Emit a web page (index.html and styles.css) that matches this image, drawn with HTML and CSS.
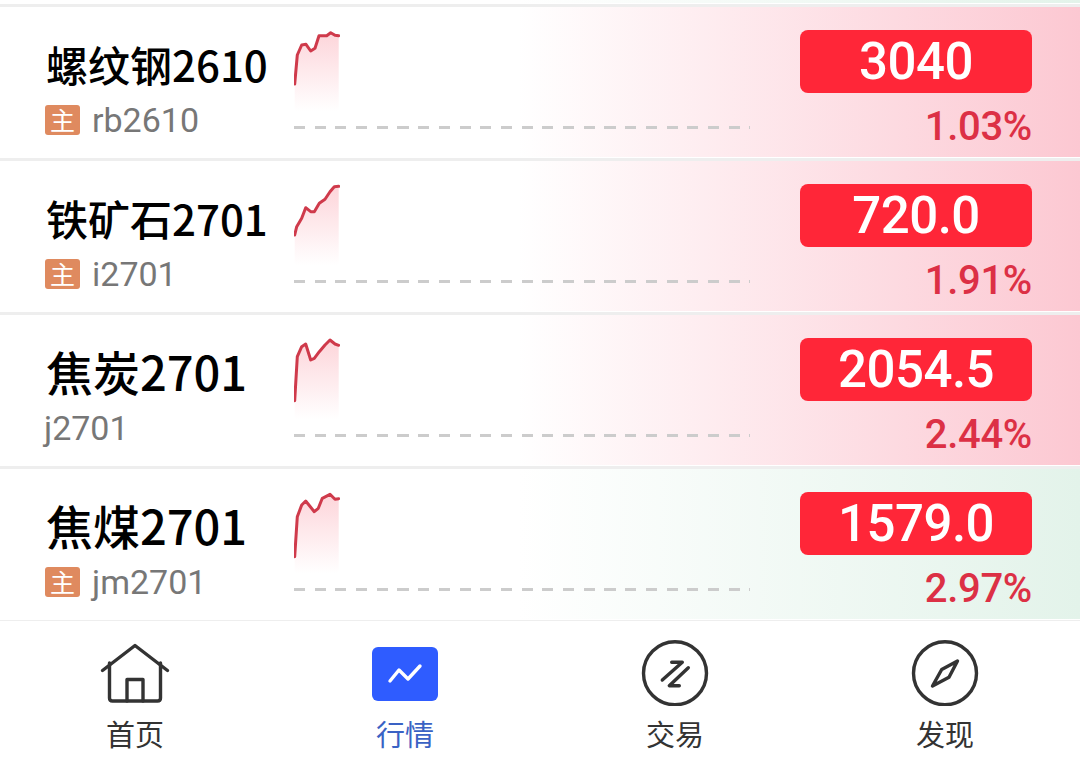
FILE: index.html
```html
<!DOCTYPE html>
<html lang="zh-CN">
<head>
    <meta charset="UTF-8">
    <title>行情</title>
    <link rel="stylesheet" href="styles.css">
</head>
<body>

<div class="list">
    <div class="row-tail"></div>

    <div class="row up">
        <div class="info">
            <div class="name small">螺纹钢2610</div>
            <div class="code"><span class="tag">主</span>rb2610</div>
        </div>
        <div class="chart">
            <svg class="spark" width="46" height="84" viewBox="0 0 46 84">
                <defs>
                    <linearGradient id="fade" x1="0" y1="0" x2="0" y2="1">
                        <stop offset="0" stop-color="#fdd5da"/>
                        <stop offset="1" stop-color="#ffffff"/>
                    </linearGradient>
                </defs>
                <polygon class="area" points="0.7,57 3.3,28 7.7,18 12,17.3 16.7,24 21,21.3 25,8.7 32.7,8.7 36.7,5.7 41,8.3 44.7,8.7 44.7,84 0.7,84"/>
                <polyline class="line" points="0.7,57 3.3,28 7.7,18 12,17.3 16.7,24 21,21.3 25,8.7 32.7,8.7 36.7,5.7 41,8.3 44.7,8.7"/>
            </svg>
            <div class="dash"></div>
        </div>
        <div class="quote">
            <div class="price">3040</div>
            <div class="pct">1.03%</div>
        </div>
    </div>

    <div class="row up">
        <div class="info">
            <div class="name small">铁矿石2701</div>
            <div class="code"><span class="tag">主</span>i2701</div>
        </div>
        <div class="chart">
            <svg class="spark" width="46" height="84" viewBox="0 0 46 84">
                <polygon class="area" points="0.7,54 2.7,45.7 7.7,37.3 11.7,26.7 16.7,30.7 20.3,30.7 25.3,22.3 31,18.3 36,10.7 40.3,5.7 44.7,5.3 44.7,84 0.7,84"/>
                <polyline class="line" points="0.7,54 2.7,45.7 7.7,37.3 11.7,26.7 16.7,30.7 20.3,30.7 25.3,22.3 31,18.3 36,10.7 40.3,5.7 44.7,5.3"/>
            </svg>
            <div class="dash"></div>
        </div>
        <div class="quote">
            <div class="price">720.0</div>
            <div class="pct">1.91%</div>
        </div>
    </div>

    <div class="row up">
        <div class="info">
            <div class="name">焦炭2701</div>
            <div class="code plain">j2701</div>
        </div>
        <div class="chart">
            <svg class="spark" width="46" height="84" viewBox="0 0 46 84">
                <polygon class="area" points="0.7,65.7 3.3,21.7 7.7,11.7 11.7,9 16.7,25 20.3,23.3 25.3,16.7 31,10 36,5 41,9 44.7,10.3 44.7,84 0.7,84"/>
                <polyline class="line" points="0.7,65.7 3.3,21.7 7.7,11.7 11.7,9 16.7,25 20.3,23.3 25.3,16.7 31,10 36,5 41,9 44.7,10.3"/>
            </svg>
            <div class="dash"></div>
        </div>
        <div class="quote">
            <div class="price">2054.5</div>
            <div class="pct">2.44%</div>
        </div>
    </div>

    <div class="row down">
        <div class="info">
            <div class="name">焦煤2701</div>
            <div class="code"><span class="tag">主</span>jm2701</div>
        </div>
        <div class="chart">
            <svg class="spark" width="46" height="84" viewBox="0 0 46 84">
                <polygon class="area" points="0.7,67.7 3.3,27.7 7.7,16 11.7,12 20.3,22.7 24.3,19.3 28.3,9.3 36,5.3 41,10.3 44.7,9.7 44.7,84 0.7,84"/>
                <polyline class="line" points="0.7,67.7 3.3,27.7 7.7,16 11.7,12 20.3,22.7 24.3,19.3 28.3,9.3 36,5.3 41,10.3 44.7,9.7"/>
            </svg>
            <div class="dash"></div>
        </div>
        <div class="quote">
            <div class="price">1579.0</div>
            <div class="pct">2.97%</div>
        </div>
    </div>
</div>

<nav class="tabbar">
    <div class="tab">
        <svg class="tab-icon" width="70" height="66" viewBox="0 0 70 66">
            <path d="M2.5 30.5 L35 5.5 L67.5 30.5" />
            <path d="M9.5 23 V58 Q9.5 61 12.5 61 H57.5 Q60.5 61 60.5 58 V23" />
            <path d="M27 61 V39.5 H43 V61" />
        </svg>
        <span>首页</span>
    </div>
    <div class="tab active">
        <svg class="tab-icon" width="70" height="66" viewBox="0 0 70 66">
            <rect class="solid" x="2" y="7" width="66" height="54" rx="6"/>
            <path class="zig" d="M20 41 L29 30 L38 39 L50 26" />
        </svg>
        <span>行情</span>
    </div>
    <div class="tab">
        <svg class="tab-icon" width="70" height="66" viewBox="0 0 70 66">
            <circle cx="35" cy="33.3" r="31.5"/>
            <path d="M31.7 22.3 H42.3 L22.3 40" />
            <path d="M48.3 27.7 L29.3 45.7 H39.3" />
        </svg>
        <span>交易</span>
    </div>
    <div class="tab">
        <svg class="tab-icon" width="70" height="66" viewBox="0 0 70 66">
            <circle cx="35" cy="33.3" r="31.5"/>
            <path d="M47.5 21 L31.7 29.5 L22.5 46 L39 37.3 Z" />
        </svg>
        <span>发现</span>
    </div>
</nav>

</body>
</html>
```

FILE: styles.css
```css
html, body { margin: 0; padding: 0; }
body {
    width: 1080px;
    height: 773px;
    overflow: hidden;
    background-color: #fff;
    font-family: Roboto, "Noto Sans CJK SC", sans-serif;
}

.list { background-color: #eee; }
.row-tail {
    height: 3px;
    margin-bottom: 3px;
    border-bottom: 1px solid #fff;
    background: linear-gradient(to right, #fff 48%, #e3f3ea 100%);
}
.row {
    display: flex;
    height: 150px;
    padding: 0 48px 0 44px;
    margin-bottom: 3px;
    border-bottom: 1px solid #fff;
    box-sizing: content-box;
}
.row:last-child { margin-bottom: 0; }
.row.up { background: linear-gradient(to right, #fff 48%, #fcc8d2 100%); }
.row.down { background: linear-gradient(to right, #fff 48%, #e3f3ea 100%); }

.info { width: 250px; }
.name {
    height: 60px;
    margin-top: 26px;
    padding-left: 2px;
    font-family: "Noto Sans CJK SC", sans-serif;
    font-size: 47px;
    font-weight: 500;
    line-height: 60px;
    color: #000;
}
.name.small { margin-top: 27px; font-size: 42px; }
.code {
    display: flex;
    align-items: center;
    height: 40px;
    margin-top: 7px;
    font-size: 34px;
    color: #777;
}
.name.small + .code { margin-top: 6px; }
.tag {
    width: 35px;
    height: 30px;
    margin-left: 1px;
    margin-right: 12px;
    border-radius: 3px;
    background-color: #df8a5f;
    color: #fff;
    font-family: "Noto Sans CJK SC", sans-serif;
    font-size: 25px;
    line-height: 29px;
    text-align: center;
}

.chart {
    display: flex;
    flex-direction: column;
    width: 456px;
    padding-top: 20px;
}
.spark { display: block; }
.area { fill: url(#fade); }
.line {
    fill: none;
    stroke: #cf3a4b;
    stroke-width: 3;
    stroke-linejoin: round;
    stroke-linecap: round;
}
.dash {
    height: 3px;
    margin-top: 15px;
    background: repeating-linear-gradient(to right, #ccc 0, #ccc 11px, transparent 11px, transparent 20.7px);
}

.quote {
    display: flex;
    flex-direction: column;
    align-items: flex-end;
    width: 232px;
    margin-left: 50px;
}
.price {
    width: 232px;
    height: 63px;
    margin-top: 23px;
    border-radius: 8px;
    background-color: #ff2638;
    color: #fff;
    font-size: 51px;
    font-weight: 500;
    line-height: 63px;
    letter-spacing: -0.5px;
    text-align: center;
}
.pct {
    margin-top: 9px;
    font-size: 40px;
    font-weight: 500;
    line-height: 50px;
    letter-spacing: -0.3px;
    color: #dc3045;
}

.tabbar {
    display: grid;
    grid-template-columns: repeat(4, 1fr);
    height: 152px;
    padding-top: 19px;
    border-top: 1px solid #eee;
    box-sizing: border-box;
    background-color: #fff;
}
.tab {
    display: flex;
    flex-direction: column;
    align-items: center;
    gap: 9px;
    font-family: "Noto Sans CJK SC", sans-serif;
    font-size: 29px;
    line-height: 36px;
    color: #333;
}
.tab.active { color: #3a62c4; }
.tab-icon { display: block; }
.tab-icon path, .tab-icon circle {
    fill: none;
    stroke: #333;
    stroke-width: 3.4;
    stroke-linejoin: round;
    stroke-linecap: round;
}
.tab-icon .solid { fill: #2f5cff; }
.tab-icon .zig { stroke: #fff; }
```
